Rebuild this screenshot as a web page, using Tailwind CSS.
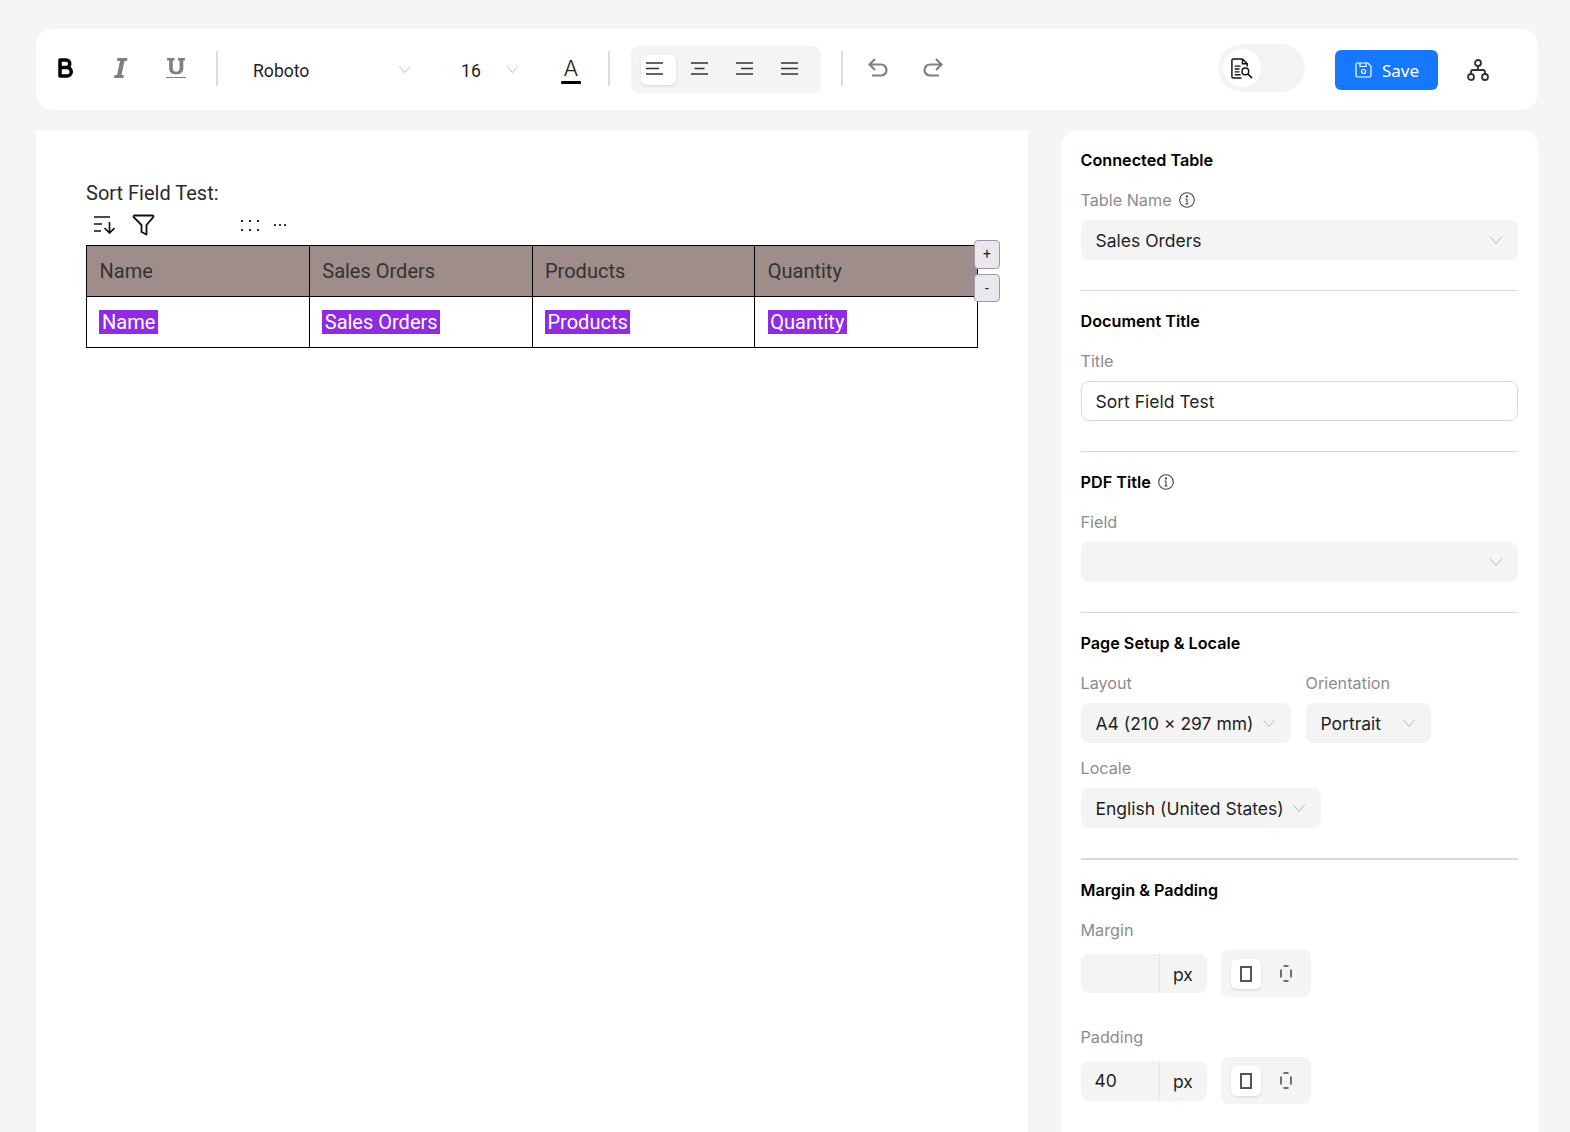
<!DOCTYPE html>
<html lang="en">
  <head>
    <title>Document Editor</title>
    <script src="https://cdn.jsdelivr.net/npm/@tailwindcss/browser@4"></script>
  </head>
  <body class="bg-[#f5f5f5] h-screen overflow-hidden font-['Inter',sans-serif] text-[#1f1f1f]">
    <div class="pl-9 pt-[29px] w-[1570px]">
      <!-- Toolbar -->
      <div class="h-[81px] w-[1502px] bg-white rounded-2xl flex items-center shadow-[0_1px_2px_rgba(0,0,0,0.03)]">
        <svg class="ml-[22px] w-[15px] h-[20px] shrink-0 -mt-[3px]" viewBox="0 0 15 20" fill="none" stroke="#000" stroke-width="3.500" stroke-linejoin="round"><path d="M2 2h6a3.700 3.700 0 0 1 0 7.500H2zM2 9.500h7a4.200 4.200 0 0 1 0 8.500H2z"/></svg>
        <svg class="ml-[41px] w-[14px] h-[20px] shrink-0 -mt-[3px]" viewBox="0 0 14 20"><path d="M3.500 0H13.500l-.6 3H10.500L7.500 17h2.400L9.400 20H0l.5-3H3L6 3H3z" fill="#808080"/></svg>
        <svg class="ml-[38px] w-[20px] h-[20px] shrink-0 -mt-[3px]" viewBox="0 0 20 20"><path d="M1 0h7.500v2.500H6.800v7.500c0 2.500 1.200 3.700 3.400 3.700s3.400-1.200 3.400-3.700V2.500H12V0h7v2.500h-1.700v7.800c0 4.300-2.600 6-7.100 6s-7-1.700-7-6V2.500H1z" fill="#808080"/><path d="M0 19.500h20" stroke="#808080"/></svg>
        <div class="ml-[30px] w-[2px] h-[35px] bg-[#dcdcdc] shrink-0 -mt-[3px]"></div>
        <span class="ml-[35px] w-[145px] shrink-0 font-['Roboto',sans-serif] text-[17.600px] mt-[4px]">Roboto</span>
        <svg class="w-[13px] h-[9px] shrink-0 text-[#b8b8b8]" viewBox="0 0 14 10" fill="none" stroke="currentColor"><path d="M1 1.500l6 7 6-7"/></svg>
        <span class="ml-[50px] w-[45px] shrink-0 font-['Roboto',sans-serif] text-[17.600px] mt-[4px]">16</span>
        <svg class="w-[13px] h-[9px] shrink-0 text-[#b8b8b8]" viewBox="0 0 14 10" fill="none" stroke="currentColor"><path d="M1 1.500l6 7 6-7"/></svg>
        <div class="ml-[42px] w-[20px] shrink-0 flex flex-col items-center mt-[1px]">
          <span class="text-[22px] leading-[24px] font-light">A</span>
          <div class="w-[20px] h-[3px] bg-black rounded-[1px] mt-[1px]"></div>
        </div>
        <div class="ml-[27px] w-[2px] h-[35px] bg-[#dcdcdc] shrink-0 -mt-[3px]"></div>
        <div class="ml-[21px] w-[190px] h-[47px] shrink-0 bg-[#f4f4f4] rounded-lg flex items-center pl-[10px]">
          <div class="w-[35px] h-[30px] bg-white rounded-md shadow-[0_1px_3px_rgba(0,0,0,0.12)] flex items-center pl-[5px]">
            <svg class="w-[17px] h-[13px] -mt-[2px]" viewBox="0 0 17 13" stroke="#333" stroke-width="1.300"><path d="M0 1h17M0 6.500h13M0 12h17"/></svg>
          </div>
          <div class="ml-[15px] w-[29px]">
            <svg class="w-[17px] h-[13px] -mt-[2px]" viewBox="0 0 17 13" stroke="#333" stroke-width="1.300"><path d="M0 1h17M3.500 6.500h10M0 12h17"/></svg>
          </div>
          <div class="ml-[16px] w-[29px]">
            <svg class="w-[17px] h-[13px] -mt-[2px]" viewBox="0 0 17 13" stroke="#333" stroke-width="1.300"><path d="M0 1h17M5 6.500h12M0 12h17"/></svg>
          </div>
          <div class="ml-[16px] w-[17px]">
            <svg class="w-[17px] h-[13px] -mt-[2px]" viewBox="0 0 17 13" stroke="#333" stroke-width="1.300"><path d="M0 1h17M0 6.500h17M0 12h17"/></svg>
          </div>
        </div>
        <div class="ml-[20px] w-[2px] h-[35px] bg-[#dcdcdc] shrink-0 -mt-[3px]"></div>
        <svg class="ml-[25px] w-[20px] h-[19px] shrink-0 -mt-[4px]" viewBox="0 0 20 19" fill="none" stroke="#808080" stroke-width="2.200"><path d="M7 1L1.500 6.500 7 12M1.500 6.500H13a5.500 5.500 0 0 1 0 11H4"/></svg>
        <svg class="ml-[35px] w-[20px] h-[19px] shrink-0 -mt-[4px]" viewBox="0 0 20 19" fill="none" stroke="#808080" stroke-width="2.200"><path d="M13 1l5.500 5.500L13 12M18.500 6.500H7a5.500 5.500 0 0 0 0 11h9"/></svg>
        <div class="ml-[275px] w-[87px] h-[48px] shrink-0 -mt-[3px] rounded-full bg-[#f4f4f4] flex items-center pl-[5px]">
          <div class="w-[38px] h-[38px] rounded-full bg-white flex items-center justify-center">
            <svg class="w-[23px] h-[23px] -ml-[2px]" viewBox="0 0 24 24" fill="none" stroke="#111" stroke-width="1.500"><path d="M13 2H3.500A1.500 1.500 0 0 0 2 3.500v17A1.500 1.500 0 0 0 3.500 22H12"/><path d="M13 2l5 5v3M13 2v5h5"/><path d="M5 9.500h6M5 12.500h5M5 15.500h5M5 18.500h6"/><circle cx="16" cy="15" r="3.500"/><path d="M18.500 17.500L23 22" stroke-width="1.700"/></svg>
          </div>
        </div>
        <div class="ml-[30px] w-[103px] h-[40px] shrink-0 rounded-md bg-[#1677ff] flex items-center justify-center gap-[9px] text-white text-[17px] font-['Noto_Sans',sans-serif]">
          <svg class="w-[18px] h-[18px] ml-[1px]" viewBox="0 0 18 18" fill="none" stroke="#fff" stroke-width="1.200"><path d="M2.500 2h10.300L16 5.200v9.300a1.500 1.500 0 0 1-1.500 1.500h-12A1.500 1.500 0 0 1 1 14.500v-11A1.500 1.500 0 0 1 2.500 2z"/><path d="M5 2v3.500h6V2"/><circle cx="8.500" cy="10.500" r="2"/></svg>
          <span class="pt-[2px]">Save</span>
        </div>
        <svg class="ml-[29px] w-[22px] h-[22px] shrink-0" viewBox="0 0 22 22" fill="none" stroke="#333" stroke-width="1.800"><circle cx="11" cy="4" r="3"/><circle cx="4" cy="18" r="3"/><circle cx="18" cy="18" r="3"/><path d="M11 7v4M4 15v-2a2 2 0 0 1 2-2h10a2 2 0 0 1 2 2v2"/></svg>
      </div>

      <div class="mt-5 flex items-start gap-[33px]">
        <!-- Page -->
        <div class="w-[992px] h-[1002px] shrink-0 bg-white px-[50px] pt-[50px]">
          <div class="font-['Roboto',sans-serif] text-[20px] leading-[26px] text-[#2b2b2b]">Sort Field Test:</div>
          <div class="h-[38px] flex items-center">
            <svg class="ml-[8px] w-[21px] h-[18px] shrink-0" viewBox="0 0 21 18" fill="none" stroke="#111" stroke-width="1.700"><path d="M0 1h16M0 8h8M0 15h7M15.500 6v11M10.500 12l5 5 5-5"/></svg>
            <svg class="ml-[17px] w-[23px] h-[22px] shrink-0" viewBox="0 0 23 22" fill="none" stroke="#111" stroke-width="1.800" stroke-linejoin="round"><path d="M2.500 1.500h18a1 1 0 0 1 .8 1.600L14.500 11v9.500l-5-2.500v-7L1.700 3.100a1 1 0 0 1 .8-1.600z"/></svg>
            <div class="ml-[86px] grid grid-cols-3 gap-x-[6px] gap-y-[7px]">
              <i class="w-[2px] h-[2px] bg-[#222]"></i><i class="w-[2px] h-[2px] bg-[#222]"></i><i class="w-[2px] h-[2px] bg-[#222]"></i>
              <i class="w-[2px] h-[2px] bg-[#222]"></i><i class="w-[2px] h-[2px] bg-[#222]"></i><i class="w-[2px] h-[2px] bg-[#222]"></i>
            </div>
            <div class="ml-[15px] flex gap-[3px]">
              <i class="w-[2px] h-[2px] bg-[#333]"></i><i class="w-[2px] h-[2px] bg-[#333]"></i><i class="w-[2px] h-[2px] bg-[#333]"></i>
            </div>
          </div>
          <div class="relative mt-[1px] w-[892px]">
            <table class="w-[892px] table-fixed border-collapse font-['Roboto',sans-serif] text-[20px]">
              <tr class="h-[51px] bg-[#9e8d8b] text-[#333]">
                <td class="border border-black pl-[12.500px]">Name</td>
                <td class="border border-black pl-[12.500px]">Sales Orders</td>
                <td class="border border-black pl-[12.500px]">Products</td>
                <td class="border border-black pl-[12.500px]">Quantity</td>
              </tr>
              <tr class="h-[51px]">
                <td class="border border-black pl-3"><span class="bg-[#8f2be0] text-white px-[3px]">Name</span></td>
                <td class="border border-black pl-[12.500px]"><span class="bg-[#8f2be0] text-white px-[2.500px]">Sales Orders</span></td>
                <td class="border border-black pl-[12.500px]"><span class="bg-[#8f2be0] text-white px-[2.500px]">Products</span></td>
                <td class="border border-black pl-[12.500px]"><span class="bg-[#8f2be0] text-white px-[2.500px]">Quantity</span></td>
              </tr>
            </table>
            <div class="absolute left-[888px] top-[-5px] w-[26px] h-[29px] bg-[#e9e9ed] border border-[#9a9aa5] rounded-[4px] flex items-center justify-center text-[14px] font-['Roboto',sans-serif]">+</div>
            <div class="absolute left-[888px] top-[29px] w-[26px] h-[28px] bg-[#e9e9ed] border border-[#9a9aa5] rounded-[4px] flex items-center justify-center text-[14px] font-['Roboto',sans-serif]">-</div>
          </div>
        </div>

        <!-- Settings panel -->
        <div class="w-[477px] h-[1002px] shrink-0 bg-white rounded-t-2xl pl-[19.500px] pr-5 pt-[19px] text-[16.200px]">
          <div class="h-[22px] leading-[22px] font-semibold text-black">Connected Table</div>
          <div class="mt-[18px] h-[22px] leading-[22px] text-[#8c8c8c] flex items-center gap-[7px]">Table Name
            <svg class="w-[16px] h-[16px]" viewBox="0 0 16 16" fill="none" stroke="#444" stroke-width="1.100"><circle cx="8" cy="8" r="7.300"/><path d="M8 7v5M6.500 12h3M6.500 7H8"/><circle cx="8" cy="4.500" r=".6" fill="#444"/></svg>
          </div>
          <div class="mt-[9px] h-10 rounded-lg bg-[#f4f4f4] flex items-center justify-between px-[15px] text-[17.500px]">
            <span class="pt-[2px]">Sales Orders</span>
            <svg class="w-[14px] h-[10px] text-[#b8b8b8]" viewBox="0 0 14 10" fill="none" stroke="currentColor"><path d="M1 1.500l6 7 6-7"/></svg>
          </div>
          <div class="mt-[30px] border-t border-[#d9d9d9]"></div>

          <div class="mt-[19px] h-[22px] leading-[22px] font-semibold text-black">Document Title</div>
          <div class="mt-[18px] h-[22px] leading-[22px] text-[#8c8c8c]">Title</div>
          <div class="mt-[9px] h-10 rounded-lg bg-white border border-[#d9d9d9] flex items-center pl-[14px] pt-[2px] text-[17.500px]">Sort Field Test</div>
          <div class="mt-[30px] border-t border-[#d9d9d9]"></div>

          <div class="mt-[19px] h-[22px] leading-[22px] font-semibold text-black flex items-center gap-[7px]">PDF Title
            <svg class="w-[16px] h-[16px]" viewBox="0 0 16 16" fill="none" stroke="#444" stroke-width="1.100"><circle cx="8" cy="8" r="7.300"/><path d="M8 7v5M6.500 12h3M6.500 7H8"/><circle cx="8" cy="4.500" r=".6" fill="#444"/></svg>
          </div>
          <div class="mt-[18px] h-[22px] leading-[22px] text-[#8c8c8c]">Field</div>
          <div class="mt-[9px] h-10 rounded-lg bg-[#f4f4f4] flex items-center justify-end pr-[15px]">
            <svg class="w-[14px] h-[10px] text-[#b8b8b8]" viewBox="0 0 14 10" fill="none" stroke="currentColor"><path d="M1 1.500l6 7 6-7"/></svg>
          </div>
          <div class="mt-[30px] border-t border-[#d9d9d9]"></div>

          <div class="mt-[19px] h-[22px] leading-[22px] font-semibold text-black">Page Setup &amp; Locale</div>
          <div class="mt-[18px] flex gap-[15px]">
            <div>
              <div class="h-[22px] leading-[22px] text-[#8c8c8c]">Layout</div>
              <div class="mt-[9px] h-10 w-[210px] rounded-lg bg-[#f4f4f4] flex items-center justify-between px-[15px] text-[17.500px]">
                <span class="pt-[2px]">A4 (210 × 297 mm)</span>
                <svg class="w-[14px] h-[10px] text-[#b8b8b8]" viewBox="0 0 14 10" fill="none" stroke="currentColor"><path d="M1 1.500l6 7 6-7"/></svg>
              </div>
            </div>
            <div>
              <div class="h-[22px] leading-[22px] text-[#8c8c8c]">Orientation</div>
              <div class="mt-[9px] h-10 w-[125px] rounded-lg bg-[#f4f4f4] flex items-center justify-between px-[15px] text-[17.500px]">
                <span class="pt-[2px]">Portrait</span>
                <svg class="w-[14px] h-[10px] text-[#b8b8b8]" viewBox="0 0 14 10" fill="none" stroke="currentColor"><path d="M1 1.500l6 7 6-7"/></svg>
              </div>
            </div>
          </div>
          <div class="mt-[14px] h-[22px] leading-[22px] text-[#8c8c8c]">Locale</div>
          <div class="mt-[9px] h-10 w-[240px] rounded-lg bg-[#f4f4f4] flex items-center justify-between px-[15px] text-[17.500px]">
            <span class="pt-[2px]">English (United States)</span>
            <svg class="w-[14px] h-[10px] text-[#b8b8b8]" viewBox="0 0 14 10" fill="none" stroke="currentColor"><path d="M1 1.500l6 7 6-7"/></svg>
          </div>
          <div class="mt-[30px] border-t-2 border-[#d9d9d9]"></div>

          <div class="mt-[19px] h-[22px] leading-[22px] font-semibold text-black">Margin &amp; Padding</div>
          <div class="mt-[18px] h-[22px] leading-[22px] text-[#8c8c8c]">Margin</div>
          <div class="mt-[9px] flex items-center gap-[14px]">
            <div class="h-[39px] w-[126px] rounded-lg bg-[#f4f4f4] flex">
              <div class="w-[79px] border-r border-[#e6e6e6]"></div>
              <div class="flex-1 flex items-center justify-center pt-[3px] text-[17.500px]">px</div>
            </div>
            <div class="w-[90px] h-[47px] rounded-lg bg-[#f4f4f4] flex items-center pl-[10px]">
              <div class="w-[30px] h-[30px] bg-white rounded-md shadow-[0_1px_3px_rgba(0,0,0,0.12)] flex items-center justify-center">
                <div class="w-[12px] h-[16px] border-2 border-[#555]"></div>
              </div>
              <svg class="ml-[19px] w-[12px] h-[17px]" viewBox="0 0 12 17" fill="none" stroke="#444" stroke-width="1.500"><path d="M1 4.500v8M11 4.500v8M3.500 1h5M3.500 16h5"/></svg>
            </div>
          </div>
          <div class="mt-[29px] h-[22px] leading-[22px] text-[#8c8c8c]">Padding</div>
          <div class="mt-[9px] flex items-center gap-[14px]">
            <div class="h-10 w-[126px] rounded-lg bg-[#f4f4f4] flex">
              <div class="w-[79px] border-r border-[#e6e6e6] flex items-center pl-[14px] pt-[2px] text-[17.500px]">40</div>
              <div class="flex-1 flex items-center justify-center pt-[3px] text-[17.500px]">px</div>
            </div>
            <div class="w-[90px] h-[47px] rounded-lg bg-[#f4f4f4] flex items-center pl-[10px]">
              <div class="w-[30px] h-[30px] bg-white rounded-md shadow-[0_1px_3px_rgba(0,0,0,0.12)] flex items-center justify-center">
                <div class="w-[12px] h-[16px] border-2 border-[#555]"></div>
              </div>
              <svg class="ml-[19px] w-[12px] h-[17px]" viewBox="0 0 12 17" fill="none" stroke="#444" stroke-width="1.500"><path d="M1 4.500v8M11 4.500v8M3.500 1h5M3.500 16h5"/></svg>
            </div>
          </div>
        </div>
      </div>
    </div>
  </body>
</html>
